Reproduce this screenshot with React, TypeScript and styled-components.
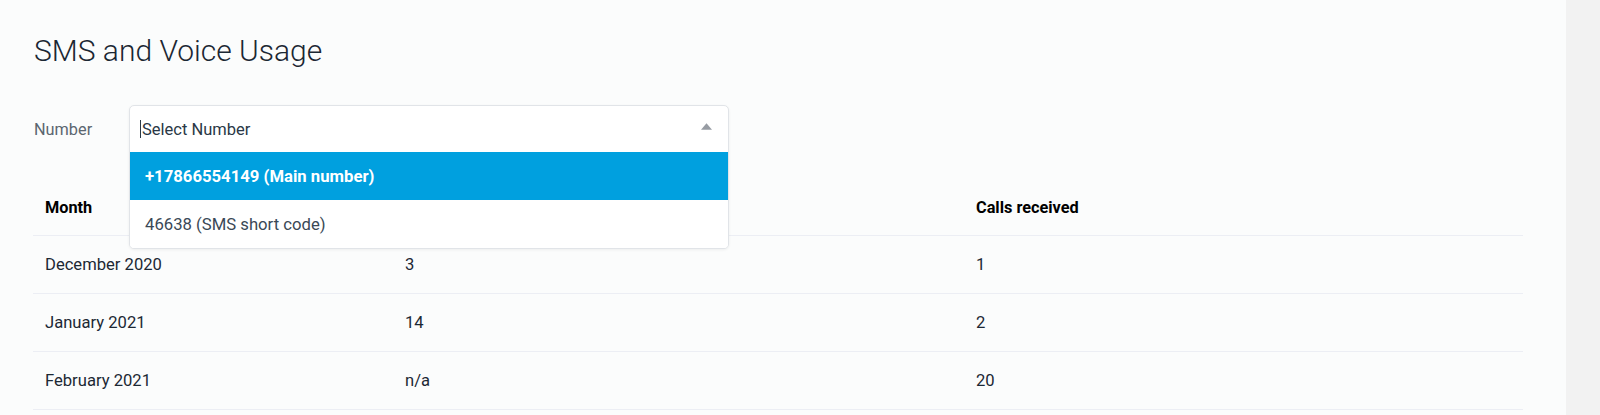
import React from 'react';
import styled, { createGlobalStyle } from 'styled-components';

const GlobalStyle = createGlobalStyle`
  html, body {
    margin: 0;
    padding: 0;
    background: #f2f2f2;
  }
  body {
    font-family: Roboto, "Liberation Sans", Arial, sans-serif;
  }
`;

const rows = [
  { month: 'December 2020', sms: '3', calls: '1' },
  { month: 'January 2021', sms: '14', calls: '2' },
  { month: 'February 2021', sms: 'n/a', calls: '20' },
];

const options = [
  { label: '+17866554149 (Main number)', active: true },
  { label: '46638 (SMS short code)', active: false },
];

const App = () => {
  return (
    <>
      <GlobalStyle />
      <Page>
        <Main>
          <Title>SMS and Voice Usage</Title>
          <FormRow>
            <Label>Number</Label>
            <Dropdown>
              <Panel>
                <Control>
                  <Cursor />
                  <Placeholder>Select Number</Placeholder>
                  <Caret viewBox="0 0 12 7">
                    <path d="M0 7 L6 0 L12 7 Z" fill="#979ca3" />
                  </Caret>
                </Control>
                {options.map((o) => (
                  <Option key={o.label} $active={o.active}>
                    {o.label}
                  </Option>
                ))}
              </Panel>
            </Dropdown>
          </FormRow>
          <Table>
            <thead>
              <tr>
                <Th $width={360}>Month</Th>
                <Th $width={571}>SMS sent</Th>
                <Th>Calls received</Th>
              </tr>
            </thead>
            <tbody>
              {rows.map((r) => (
                <tr key={r.month}>
                  <Td>{r.month}</Td>
                  <Td>{r.sms}</Td>
                  <Td>{r.calls}</Td>
                </tr>
              ))}
            </tbody>
          </Table>
        </Main>
        <SideStrip />
      </Page>
    </>
  );
};

const Page = styled.div`
  display: flex;
  width: 1600px;
  height: 415px;
  overflow: hidden;
`;

const Main = styled.div`
  flex: 1;
  background-color: #fbfcfc;
  padding: 33px 43px 0 33px;
  box-sizing: border-box;
  display: flex;
  flex-direction: column;
`;

const SideStrip = styled.div`
  width: 34px;
  background-color: #f2f2f2;
`;

const Title = styled.h1`
  margin: 0 0 0 1px;
  font-size: 30px;
  line-height: 36px;
  font-weight: 300;
  color: #1b2733;
`;

const FormRow = styled.div`
  display: flex;
  align-items: center;
  margin-top: 36px;
  height: 48px;
`;

const Label = styled.div`
  width: 96px;
  padding-left: 1px;
  box-sizing: border-box;
  font-size: 16.3px;
  color: #5b6670;
`;

const Dropdown = styled.div`
  position: relative;
  width: 600px;
  height: 48px;
  z-index: 2;
`;

const Panel = styled.div`
  position: absolute;
  top: 0;
  left: 0;
  right: 0;
  background: #ffffff;
  border: 1px solid #e1e4e8;
  border-radius: 5px;
  box-shadow: 0 1px 3px rgba(0, 0, 0, 0.06);
  overflow: hidden;
`;

const Control = styled.div`
  display: flex;
  align-items: center;
  height: 46px;
  padding: 0 16px 0 10px;
`;

const Cursor = styled.span`
  width: 1px;
  height: 18px;
  background: #2b3a48;
  margin-right: 1px;
`;

const Placeholder = styled.span`
  flex: 1;
  font-size: 16.5px;
  color: #2a3846;
`;

const Caret = styled.svg`
  width: 11px;
  height: 7px;
  margin-top: -6px;
`;

const Option = styled.div<{ $active?: boolean }>`
  display: flex;
  align-items: center;
  height: 48px;
  padding: 0 15px;
  font-size: 16.7px;
  font-weight: ${(p) => (p.$active ? 700 : 400)};
  color: ${(p) => (p.$active ? '#ffffff' : '#3a4856')};
  background: ${(p) => (p.$active ? '#00a0df' : '#ffffff')};
`;

const Table = styled.table`
  margin-top: 27px;
  width: 1490px;
  border-collapse: collapse;
  table-layout: fixed;
`;

const Th = styled.th<{ $width?: number }>`
  box-sizing: border-box;
  width: ${(p) => (p.$width ? `${p.$width}px` : 'auto')};
  height: 55px;
  padding: 0 12px;
  text-align: left;
  font-size: 16.3px;
  font-weight: 700;
  color: #000000;
  border-bottom: 1px solid #eceef4;
`;

const Td = styled.td`
  height: 57px;
  padding: 0 12px;
  font-size: 16.6px;
  color: #1c2834;
  border-bottom: 1px solid #eceef4;
`;

export default App;
